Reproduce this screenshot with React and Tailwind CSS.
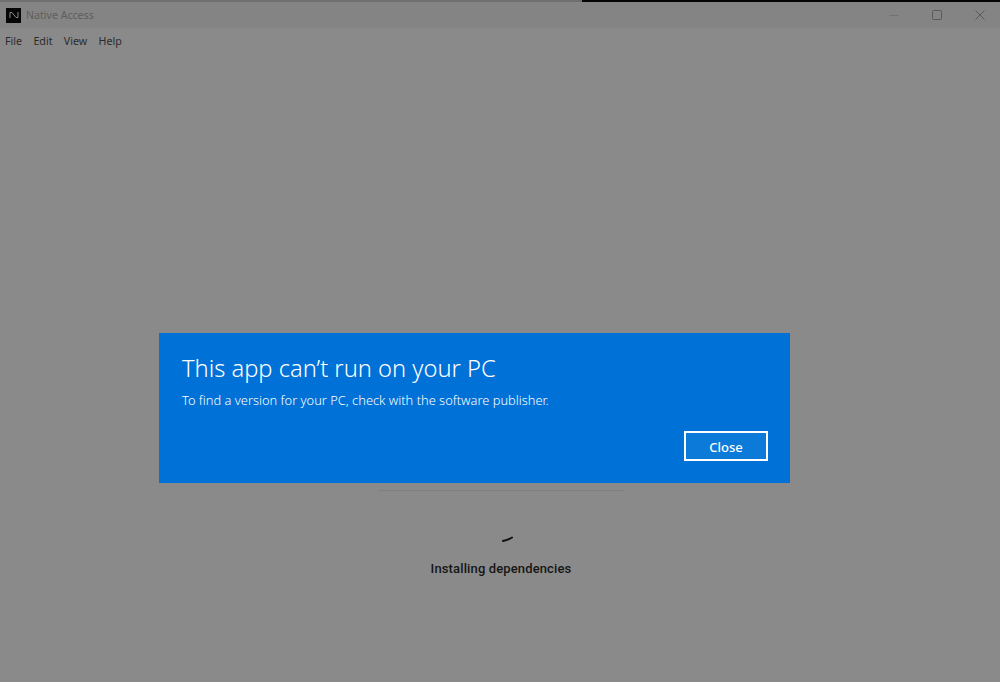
import React from "react";

const uiFont = "font-['Noto_Sans','Open_Sans',sans-serif]";

function TitleBar() {
    return (
        <div className="relative h-[28px] bg-[#848484] flex items-center">
            <div className="absolute top-0 left-0 right-0 h-[2px] flex">
                <div className="w-[582px] bg-[#6f6f6f]"></div>
                <div className="flex-1 bg-[#050505]"></div>
            </div>
            <div className="ml-[6px] mt-[2px] w-[15px] h-[15px] bg-[#060606] flex items-center justify-center">
                <svg width="10" height="6" viewBox="0 0 10 6" fill="none" stroke="#8a8a8a" strokeWidth="1">
                    <path d="M1 6V.5H3L7 5.500H9V0" />
                </svg>
            </div>
            <span className={`ml-[5px] mt-[4px] text-[10.6px] text-[#5e5e5e] ${uiFont}`}>Native Access</span>
            <div className="ml-auto flex items-center mt-[2px]">
                <svg width="10" height="10" viewBox="0 0 10 10" className="mr-[33px]" stroke="#737373" fill="none">
                    <path d="M0 5.500H10" />
                </svg>
                <svg width="10" height="10" viewBox="0 0 10 10" className="mr-[33px]" stroke="#5a5a5a" fill="none">
                    <rect x=".5" y=".5" width="9" height="9" rx="1" />
                </svg>
                <svg width="10" height="10" viewBox="0 0 10 10" className="mr-[15px]" stroke="#5a5a5a" fill="none">
                    <path d="M.5 .5L9.500 9.500M9.500 .5L.5 9.500" />
                </svg>
            </div>
        </div>
    );
}

function MenuBar() {
    const items = ["File", "Edit", "View", "Help"];
    return (
        <div className={`h-[25px] pt-[2px] bg-[#8a8a8a] flex items-center gap-[11.3px] pl-[5px] text-[10.7px] text-[#2c2c2c] ${uiFont}`}>
            {items.map((item) => (
                <span key={item}>{item}</span>
            ))}
        </div>
    );
}

function ErrorDialog() {
    return (
        <div className={`absolute left-[159px] top-[333px] w-[631px] h-[150px] bg-[#0071d7] text-white pl-[23px] pr-[22px] pt-[18px] flex flex-col ${uiFont}`}>
            <h1 className="text-[23.7px] leading-[34px] font-light">This app can’t run on your PC</h1>
            <p className="mt-[6px] text-[12.86px] leading-[18px] font-light">To find a version for your PC, check with the software publisher.</p>
            <div className="mt-auto mb-[22px] flex justify-end">
                <button className="w-[84px] h-[30px] pt-[1px] border-2 border-white bg-[#0c7ad9] text-[13px] font-medium leading-[18px] text-white">Close</button>
            </div>
        </div>
    );
}

export default function App() {
    return (
        <div className="relative w-[1000px] h-[682px] bg-[#8a8a8a] overflow-hidden">
            <TitleBar />
            <MenuBar />
            <div className="flex flex-col items-center pt-[437px]">
                <div className="ml-[2px] w-[246px] h-px bg-[#7f7f7f]"></div>
                <svg width="12" height="6" viewBox="0 0 12 6" className="mt-[45px] ml-[16px]" fill="none" stroke="#111" strokeWidth="2" strokeLinecap="round">
                    <path d="M1 5C4 4.500 7 3.500 10 1.500" />
                </svg>
                <p className="mt-[18px] ml-[2px] font-['Roboto',sans-serif] font-medium text-[13px] leading-[18px] text-[#161616] tracking-[0.13px]">Installing dependencies</p>
            </div>
            <ErrorDialog />
        </div>
    );
}
